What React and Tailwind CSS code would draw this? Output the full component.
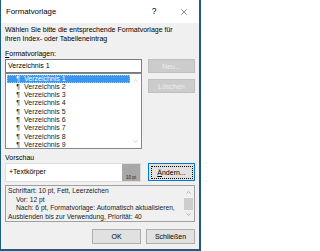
import { X, ChevronUp, ChevronDown } from 'lucide-react';

const styles = [1, 2, 3, 4, 5, 6, 7, 8, 9];

export default function App() {
  return (
    <div
      className="w-[201px] h-[251px] overflow-hidden bg-[#f0f0f0] border-l border-r-2 border-b-2 border-[#1d5f80] flex flex-col text-black"
      style={{ fontFamily: '"Liberation Sans", Arial, sans-serif' }}
    >
      {/* title bar */}
      <div className="h-[23px] shrink-0 bg-white flex items-center pl-[5px]">
        <span className="text-[7.8px] leading-none">Formatvorlage</span>
        <span className="ml-auto text-[8.5px] leading-none w-[10px] text-center">?</span>
        <X size={10} strokeWidth={1.1} className="ml-[20px] mr-[10px]" />
      </div>

      <div className="flex flex-col pl-[4px] pr-[4px]">
        <p className="mt-[1.5px] text-[7px] leading-[9px] whitespace-nowrap">
          Wählen Sie bitte die entsprechende Formatvorlage für
          <br />
          ihren Index- oder Tabelleneintrag
        </p>

        <div className="mt-[6px] text-[7px] leading-[9px]">
          <span className="underline">F</span>ormatvorlagen:
        </div>

        <div className="mt-[1.5px] flex">
          <div className="w-[137px] flex flex-col">
            <div className="h-[14px] bg-white border border-[#7a7a7a] flex items-center pl-[2px] text-[7px]">
              Verzeichnis 1
            </div>
            <div className="h-[76px] bg-white border border-[#828790] flex">
              <div className="flex-1 flex flex-col pt-[0.5px] pl-[1px]">
                {styles.map((n) => (
                  <div
                    key={n}
                    className={
                      n === 1
                        ? 'h-[8.3px] flex items-center bg-[#3b96f0] text-white text-[7px] leading-[8.3px] outline outline-dotted outline-[#ffb060] -outline-offset-1'
                        : 'h-[8.3px] flex items-center text-[#222] text-[7px] leading-[8.3px]'
                    }
                  >
                    <span className="w-[15px] text-right pr-[2px]">¶</span>
                    <span className="ml-[2px]">Verzeichnis {n}</span>
                  </div>
                ))}
              </div>
              <div className="w-[11px] flex flex-col justify-between items-center py-[3px]">
                <ChevronUp size={7} strokeWidth={1.5} className="text-[#9a9a9a]" />
                <ChevronDown size={7} strokeWidth={1.5} className="text-[#9a9a9a]" />
              </div>
            </div>
          </div>

          <div className="ml-[6px] w-[47px] flex flex-col">
            <button className="h-[14px] bg-[#cccccc] border border-[#bfbfbf] text-[#ececec] text-[7px] leading-none">
              Neu...
            </button>
            <button className="mt-[6px] h-[14px] bg-[#cccccc] border border-[#bfbfbf] text-[#ececec] text-[7px] leading-none">
              Löschen
            </button>
          </div>
        </div>

        <div className="mt-[3.5px] text-[7px] leading-[9px]">Vorschau</div>

        <div className="mt-[1.5px] flex">
          <div className="w-[136px] h-[19px] bg-white border border-[#dcdcdc] flex">
            <div className="flex-1 flex items-center pl-[3px] text-[7px]">+Textkörper</div>
            <div className="w-[18px] bg-[#a8a8a8] flex items-end justify-center pb-[1px] text-[4.5px] leading-none text-[#222]">
              10 pt
            </div>
          </div>
          <button className="ml-[7px] w-[47px] h-[18px] bg-[#e1e1e1] border border-[#0078d7] p-[1.5px] flex">
            <span className="flex-1 flex items-center justify-center border border-dotted border-black text-[7px] leading-none">
              <span className="underline">Ä</span>ndern...
            </span>
          </button>
        </div>

        <div className="mt-[3px] h-[37px] border border-[#a0a0a0] flex">
          <div className="flex-1 pl-[2px] pt-[1px] text-[6.7px] leading-[8.5px] text-[#222] whitespace-nowrap">
            <div>Schriftart: 10 pt, Fett, Leerzeichen</div>
            <div className="pl-[8px]">Vor: 12 pt</div>
            <div className="pl-[8px]">Nach: 6 pt, Formatvorlage: Automatisch aktualisieren,</div>
            <div>Ausblenden bis zur Verwendung, Priorität: 40</div>
          </div>
          <div className="w-[12px] flex flex-col items-center py-[3px]">
            <ChevronUp size={7} strokeWidth={1.5} className="text-[#606060]" />
            <div className="mt-[2px] w-[9px] h-[12px] bg-[#cdcdcd]" />
            <ChevronDown size={7} strokeWidth={1.5} className="mt-auto text-[#606060]" />
          </div>
        </div>

        <div className="mt-[7px] flex justify-end gap-[5px]">
          <button className="w-[49px] h-[15px] bg-[#e1e1e1] border border-[#adadad] text-[7px] leading-none">
            OK
          </button>
          <button className="w-[49px] h-[15px] bg-[#e1e1e1] border border-[#adadad] text-[7px] leading-none">
            Schließen
          </button>
        </div>
      </div>
    </div>
  );
}
